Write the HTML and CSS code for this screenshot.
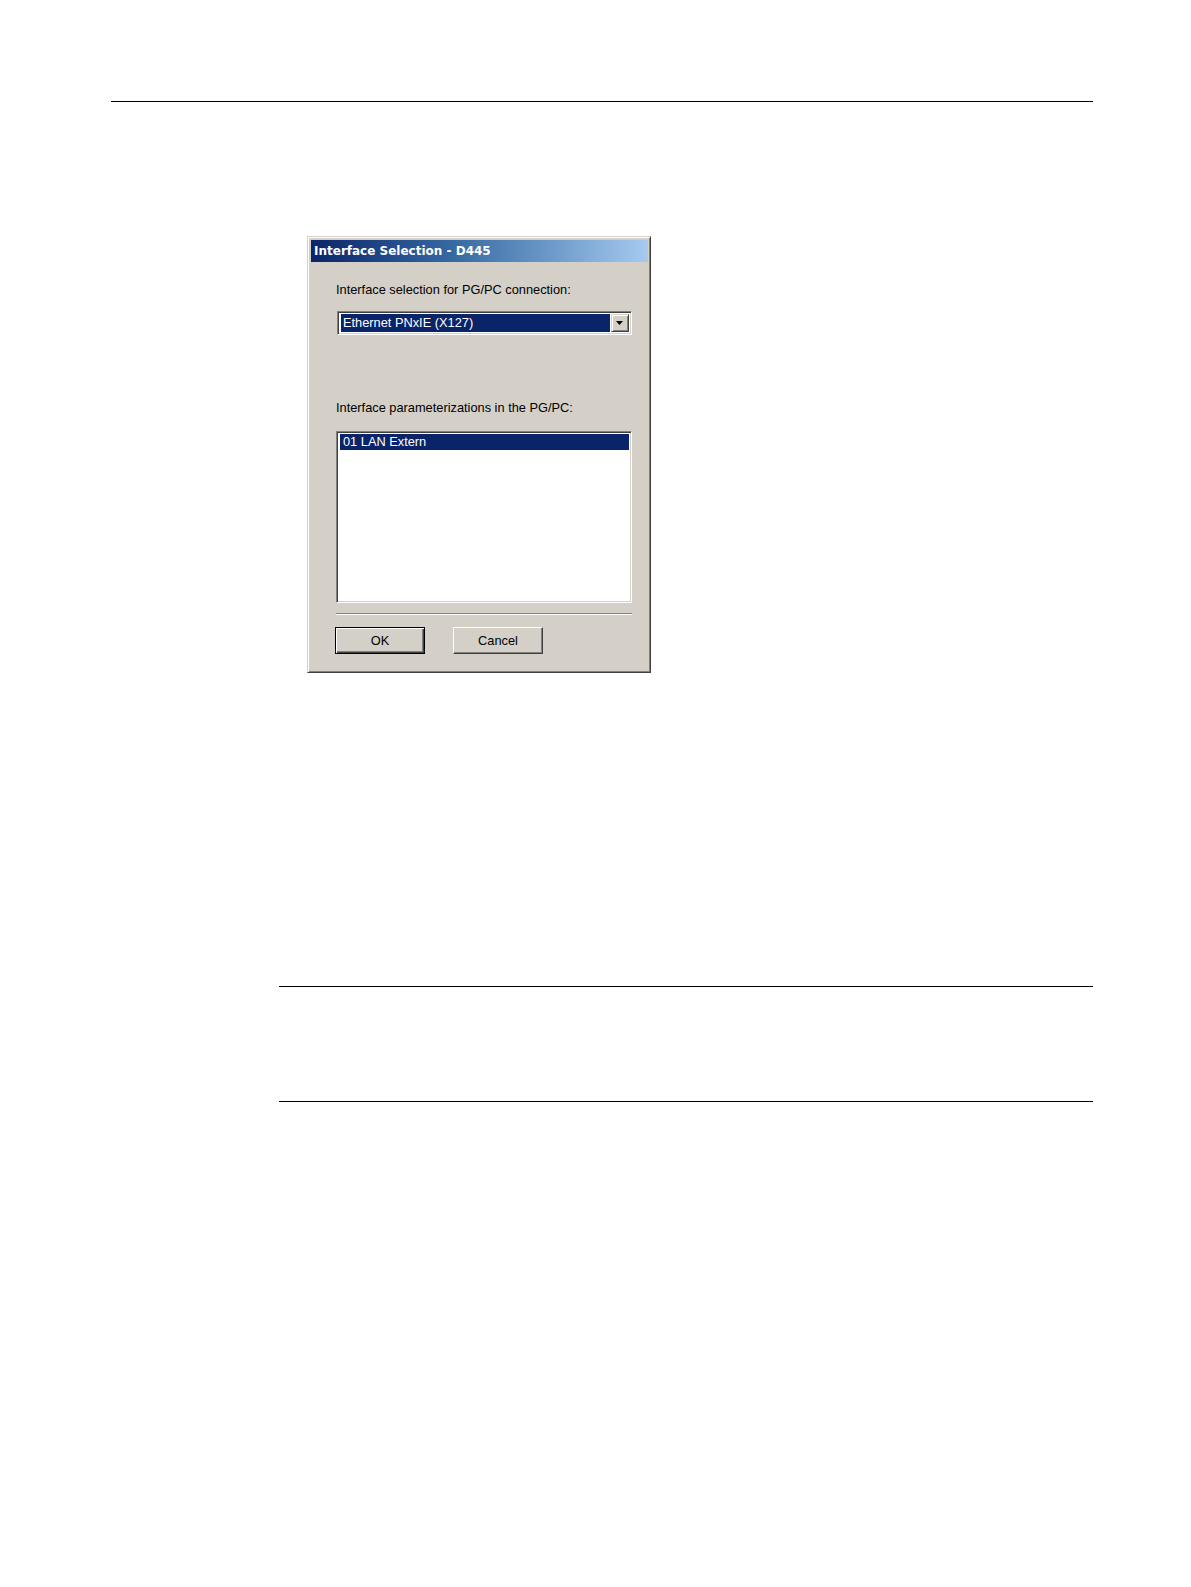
FILE: index.html
```html
<!DOCTYPE html>
<html>
<head>
<meta charset="utf-8">
<title>Interface Selection - D445</title>
<link rel="stylesheet" href="styles.css">
</head>
<body>
<div class="page">
  <div class="rule rule-top"></div>

  <div class="dialog">
    <div class="titlebar">Interface Selection - D445</div>
    <div class="content">
      <div class="label label-first">Interface selection for PG/PC connection:</div>
      <div class="combo">
        <div class="combo-value">Ethernet PNxIE (X127)</div>
        <div class="combo-btn">
          <svg width="8" height="4" viewBox="0 0 8 4"><path d="M0 0H7L3.5 4Z" fill="#000"/></svg>
        </div>
      </div>

      <div class="label label-second">Interface parameterizations in the PG/PC:</div>
      <div class="listbox">
        <div class="list-item selected">01 LAN Extern</div>
      </div>

      <div class="separator"></div>

      <div class="buttons">
        <div class="btn btn-default"><span class="btn-inner">OK</span></div>
        <div class="btn"><span class="btn-inner">Cancel</span></div>
      </div>
    </div>
  </div>

  <div class="rule rule-note-top"></div>
  <div class="rule rule-note-bottom"></div>
</div>
</body>
</html>
```

FILE: styles.css
```css
html, body {
  margin: 0;
  padding: 0;
  background: #ffffff;
  overflow: hidden;
}

.page {
  padding-top: 101px;
}

.rule {
  height: 0;
  border-top: 1.5px solid #000;
}

.rule-top {
  margin-left: 111px;
  width: 982px;
}

.dialog {
  margin: 134px 0 0 307px;
  width: 344px;
  height: 437px;
  box-sizing: border-box;
  background: #d4d0c8;
  border-top: 1px solid #d4d0c8;
  border-left: 1px solid #d4d0c8;
  border-right: 1px solid #404040;
  border-bottom: 1px solid #404040;
  box-shadow: inset 1px 1px 0 #ffffff, inset -1px -1px 0 #808080;
  padding: 3px 2px 2px 3px;
  font-family: "Liberation Sans", Arial, sans-serif;
  font-size: 12.8px;
  color: #000;
}

.titlebar {
  height: 22px;
  line-height: 22px;
  padding-left: 3px;
  background: linear-gradient(to right, #0a246a 0%, #3a6ea5 45%, #a6caf0 100%);
  color: #ffffff;
  font-family: "DejaVu Sans", Verdana, sans-serif;
  font-weight: bold;
  font-size: 12px;
  white-space: nowrap;
}

.content {
  padding: 0 15px 0 25px;
  display: flex;
  flex-direction: column;
}

.label {
  height: 16px;
  line-height: 16px;
  white-space: nowrap;
}

.label-first {
  margin-top: 20px;
}

.combo {
  margin-top: 13px;
  margin-left: 1px;
  width: 295px;
  height: 24px;
  box-sizing: border-box;
  border-top: 1px solid #808080;
  border-left: 1px solid #808080;
  border-right: 1px solid #ffffff;
  border-bottom: 1px solid #ffffff;
  box-shadow: inset 1px 1px 0 #404040, inset -1px -1px 0 #d4d0c8;
  background: #ffffff;
  padding: 2px;
  display: flex;
  gap: 1px;
}

.combo-value {
  flex: 1;
  background: #0a246a;
  color: #ffffff;
  line-height: 18px;
  padding-left: 2px;
  margin-left: 1px;
  white-space: nowrap;
}

.combo-btn {
  width: 18px;
  box-sizing: border-box;
  background: #d4d0c8;
  border-top: 1px solid #d4d0c8;
  border-left: 1px solid #d4d0c8;
  border-right: 1px solid #404040;
  border-bottom: 1px solid #404040;
  box-shadow: inset 1px 1px 0 #ffffff, inset -1px -1px 0 #808080;
  display: flex;
  align-items: center;
  justify-content: center;
}

.label-second {
  margin-top: 65px;
}

.listbox {
  margin-top: 15px;
  width: 296px;
  height: 172px;
  box-sizing: border-box;
  border-top: 1px solid #808080;
  border-left: 1px solid #808080;
  border-right: 1px solid #ffffff;
  border-bottom: 1px solid #ffffff;
  box-shadow: inset 1px 1px 0 #404040, inset -1px -1px 0 #d4d0c8;
  background: #ffffff;
  padding: 2px;
}

.list-item {
  height: 16px;
  line-height: 16px;
  padding-left: 3px;
  white-space: nowrap;
}

.list-item.selected {
  background: #0a246a;
  color: #ffffff;
  margin-left: 1px;
}

.separator {
  margin-top: 10px;
  width: 296px;
  height: 0;
  border-top: 1px solid #808080;
  border-bottom: 1px solid #ffffff;
}

.buttons {
  margin-top: 12px;
  display: flex;
  gap: 28px;
  margin-left: -1px;
}

.btn {
  width: 90px;
  height: 27px;
  box-sizing: border-box;
  background: #d4d0c8;
  border-top: 1px solid #ffffff;
  border-left: 1px solid #ffffff;
  border-right: 1px solid #404040;
  border-bottom: 1px solid #404040;
  box-shadow: inset -1px -1px 0 #808080;
  display: flex;
}

.btn-default {
  border: 1px solid #000000;
  box-shadow: inset 1px 1px 0 #ffffff, inset -1px -1px 0 #404040, inset -2px -2px 0 #808080;
}

.btn-inner {
  flex: 1;
  display: flex;
  align-items: center;
  justify-content: center;
  padding-bottom: 1px;
}

.rule-note-top {
  margin-top: 313px;
  margin-left: 279px;
  width: 814px;
}

.rule-note-bottom {
  margin-top: 113.5px;
  margin-left: 279px;
  width: 814px;
}
```
